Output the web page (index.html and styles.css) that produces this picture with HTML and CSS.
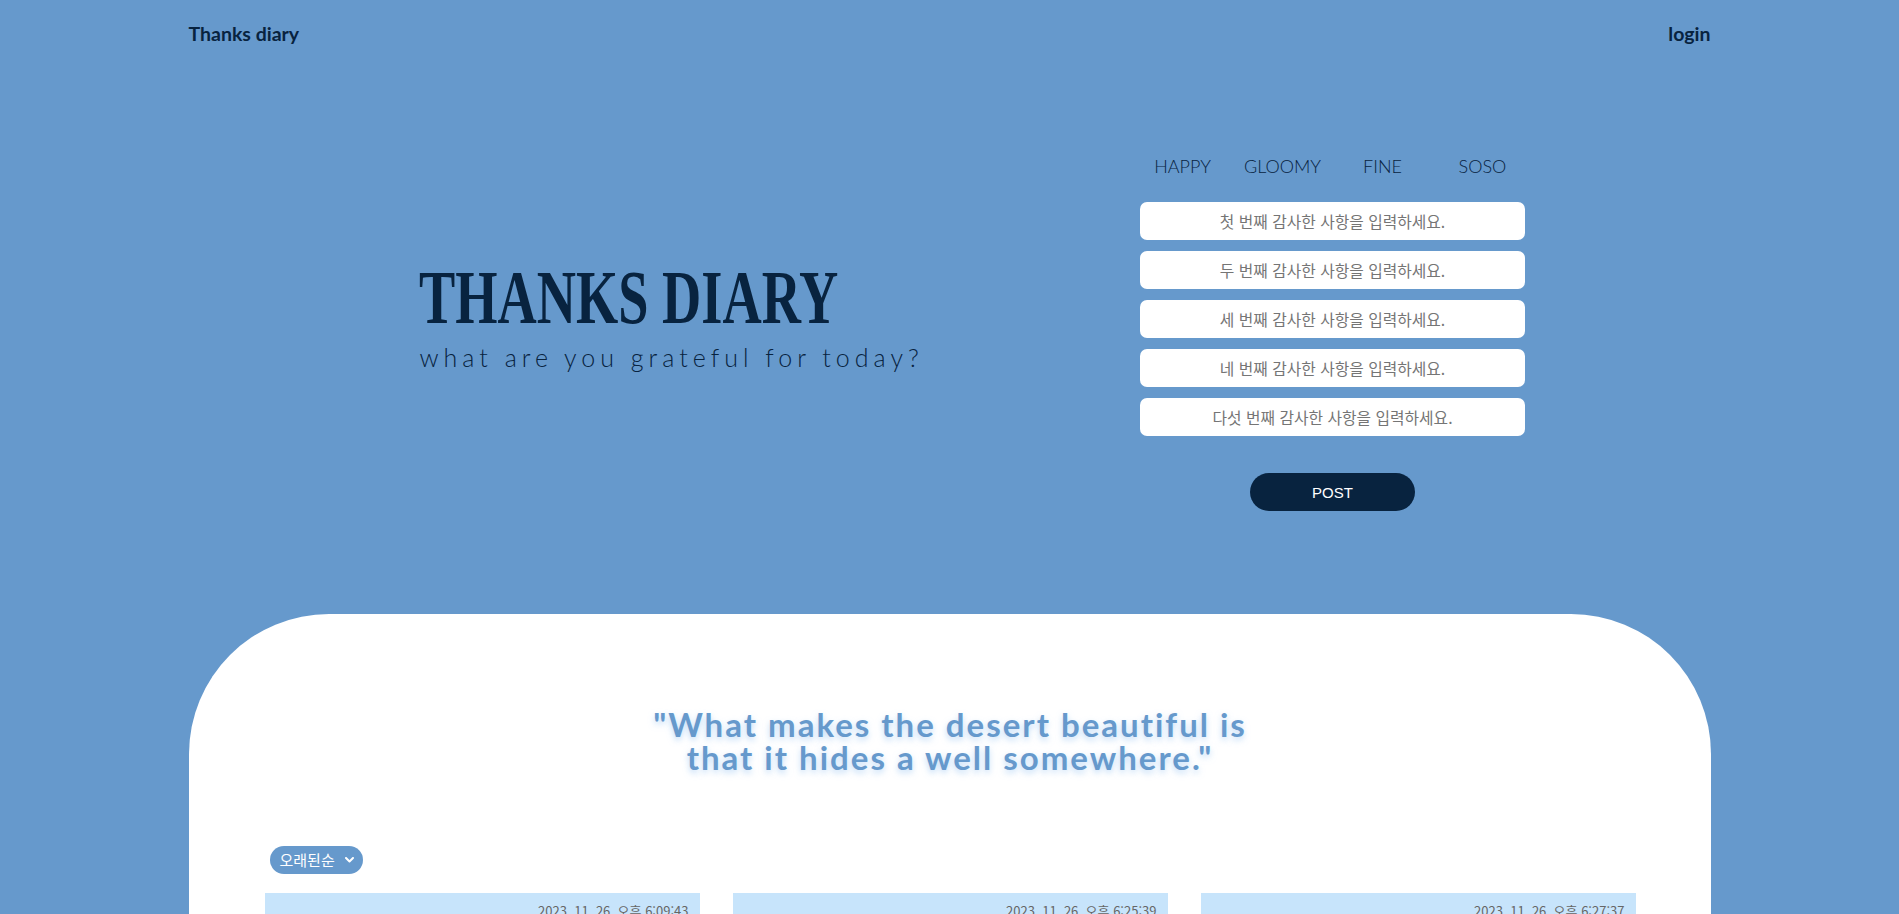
FILE: index.html
```html
<!DOCTYPE html>
<html lang="ko">
<head>
<meta charset="utf-8">
<title>Thanks diary</title>
<link rel="stylesheet" href="styles.css">
</head>
<body>
<div class="page">
  <header class="topbar">
    <a class="brand" href="#">Thanks diary</a>
    <a class="login" href="#">login</a>
  </header>

  <section class="hero">
    <div class="hero-text">
      <h1 class="hero-title">THANKS DIARY</h1>
      <p class="hero-sub">what are you grateful for today?</p>
    </div>
    <form class="entry">
      <div class="moods">
        <span class="mood">HAPPY</span>
        <span class="mood">GLOOMY</span>
        <span class="mood">FINE</span>
        <span class="mood">SOSO</span>
      </div>
      <input class="field" type="text" placeholder="첫 번째 감사한 사항을 입력하세요.">
      <input class="field" type="text" placeholder="두 번째 감사한 사항을 입력하세요.">
      <input class="field" type="text" placeholder="세 번째 감사한 사항을 입력하세요.">
      <input class="field" type="text" placeholder="네 번째 감사한 사항을 입력하세요.">
      <input class="field" type="text" placeholder="다섯 번째 감사한 사항을 입력하세요.">
      <button class="post" type="button">POST</button>
    </form>
  </section>

  <main class="board">
    <p class="quote">"What makes the desert beautiful is<br>that it hides a well somewhere."</p>
    <div class="toolbar">
      <div class="sort">
        <span class="sort-label">오래된순</span>
        <svg class="chev" width="9" height="6" viewBox="0 0 9 6"><path d="M1 1 L4.5 4.5 L8 1" fill="none" stroke="#fff" stroke-width="2" stroke-linecap="round" stroke-linejoin="round"/></svg>
      </div>
    </div>
    <div class="cards">
      <article class="card"><div class="card-date">2023. 11. 26. 오후 6:09:43</div></article>
      <article class="card"><div class="card-date">2023. 11. 26. 오후 6:25:39</div></article>
      <article class="card"><div class="card-date">2023. 11. 26. 오후 6:27:37</div></article>
    </div>
  </main>
</div>
</body>
</html>
```

FILE: styles.css
```css
* { box-sizing: border-box; }

html, body {
  margin: 0;
  padding: 0;
  background: #6699cc;
  overflow: hidden;
}

body {
  font-family: "Lato", "Noto Sans CJK KR", sans-serif;
  color: #08233f;
}

.page {
  width: 1522px;
  margin: 0 auto;
}

/* header */
.topbar {
  display: flex;
  justify-content: space-between;
  align-items: center;
  padding: 22px 0 16px 0;
  height: 62px;
}

.brand, .login {
  font-family: "Lato", sans-serif;
  font-weight: 700;
  font-size: 19.5px;
  color: #08233f;
  text-decoration: none;
  line-height: 24px;
}

/* hero */
.hero {
  display: flex;
  justify-content: space-between;
  align-items: flex-start;
  padding: 93px 178px 0 230px;
}

.hero-text {
  padding-top: 104px;
}

.hero-title {
  margin: 0;
  font-family: "Liberation Serif", serif;
  font-weight: 700;
  font-size: 76px;
  line-height: 76px;
  color: #08233f;
  display: inline-block;
  transform: scaleX(0.715);
  transform-origin: left center;
  white-space: nowrap;
}

.hero-sub {
  margin: 8px 0 0 1px;
  font-family: "Lato", sans-serif;
  font-weight: 300;
  font-size: 25px;
  line-height: 29px;
  letter-spacing: 5px;
  color: #08233f;
  white-space: nowrap;
}

.entry {
  width: 400px;
  display: flex;
  flex-direction: column;
  align-items: center;
}

.moods {
  display: flex;
  width: 400px;
}

.mood {
  width: 100px;
  text-align: center;
  font-family: "Lato", sans-serif;
  font-weight: 300;
  font-size: 18px;
  line-height: 22px;
  color: #08233f;
}

.field {
  width: 385px;
  height: 38px;
  border: none;
  border-radius: 7px;
  background: #fff;
  text-align: center;
  font-family: "Noto Sans CJK KR", sans-serif;
  font-size: 15.8px;
  color: #333;
  outline: none;
  margin-top: 11px;
}

.moods + .field { margin-top: 25px; }

.field::placeholder {
  color: #757575;
}

.post {
  margin-top: 37px;
  width: 165px;
  height: 38px;
  border: none;
  border-radius: 19px;
  background: #08233f;
  color: #fff;
  font-family: "Liberation Sans", sans-serif;
  font-size: 15px;
  cursor: pointer;
}

/* board */
.board {
  margin-top: 103px;
  background: #fff;
  border-radius: 140px 140px 0 0;
  padding: 94px 75px 0 76px;
  min-height: 400px;
}

.quote {
  margin: 0;
  text-align: center;
  font-family: "Lato", sans-serif;
  font-weight: 700;
  font-size: 33px;
  line-height: 33px;
  letter-spacing: 2px;
  color: #6699cc;
  text-shadow: 0 3px 6px rgba(140, 190, 240, 0.55);
}

.toolbar {
  margin-top: 72px;
  padding-left: 5px;
  display: flex;
}

.sort {
  display: flex;
  align-items: center;
  gap: 10px;
  height: 28px;
  width: 93px;
  padding: 0 0 0 10px;
  border-radius: 14px;
  background: #6699cc;
  color: #fff;
}

.sort-label {
  font-family: "Noto Sans CJK KR", sans-serif;
  font-size: 15px;
  line-height: 20px;
}

.chev { display: block; }

.cards {
  margin-top: 19px;
  display: grid;
  grid-template-columns: repeat(3, 1fr);
  gap: 33px;
}

.card {
  background: #c7e4fb;
  height: 220px;
  padding: 8px 11px 0 11px;
}

.card-date {
  text-align: right;
  font-family: "Noto Sans CJK KR", sans-serif;
  font-size: 13px;
  line-height: 19px;
  color: #666;
}
```
